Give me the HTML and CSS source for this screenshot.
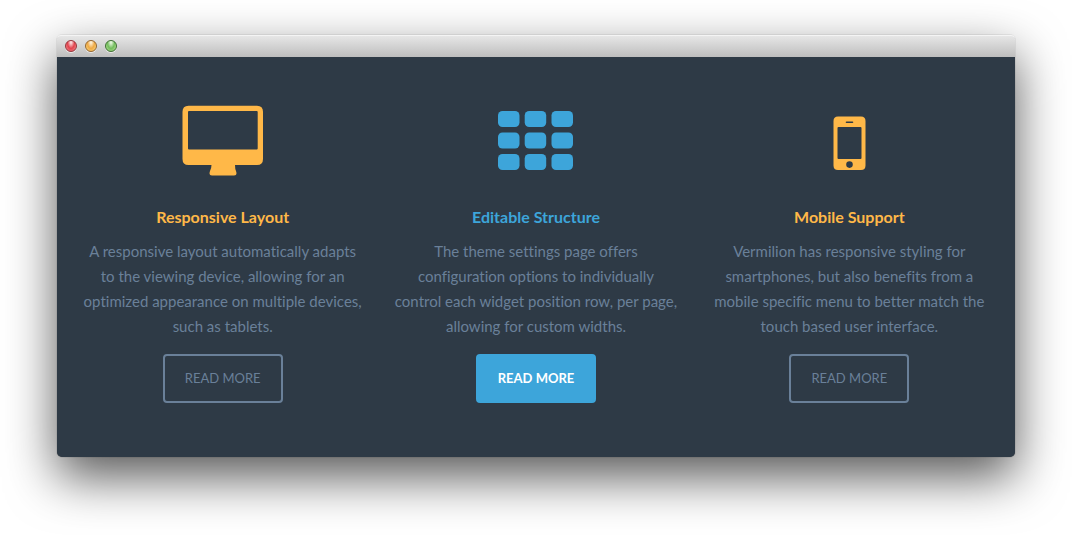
FILE: index.html
```html
<!DOCTYPE html>
<html lang="en">
<head>
<meta charset="utf-8">
<meta name="viewport" content="width=device-width, initial-scale=1">
<title>Vermilion</title>
<link rel="stylesheet" href="styles.css">
</head>
<body>
<main class="window">
  <header class="titlebar">
    <button class="light light-close" type="button" aria-label="Close"></button>
    <button class="light light-minimize" type="button" aria-label="Minimize"></button>
    <button class="light light-zoom" type="button" aria-label="Zoom"></button>
  </header>
  <div class="features">
    <section class="feature">
      <div class="icon">
        <svg width="82" height="80" viewBox="0 0 82 80" aria-hidden="true">
          <path fill="currentColor" fill-rule="evenodd" d="M7 4.700H75Q81 4.700 81 10.700V58Q81 64 75 64H53Q53 68 54 70L54.500 72Q54.500 74.500 52 74.500H30Q27.500 74.500 27.500 72L28 70Q29.500 67 29.500 64H6.500Q0.500 64 0.500 58V10.700Q0.500 4.700 6.500 4.700ZM7 10Q6 10 6 11V47.500Q6 48.500 7 48.500H74.700Q75.700 48.500 75.700 47.500V11Q75.700 10 74.700 10Z"/>
        </svg>
      </div>
      <h2 class="title">Responsive Layout</h2>
      <p class="text">A responsive layout automatically adapts to the viewing device, allowing for an optimized appearance on multiple devices, such as tablets.</p>
      <a class="button" href="#">READ MORE</a>
    </section>
    <section class="feature feature-active">
      <div class="icon">
        <svg width="76" height="80" viewBox="0 0 76 80" fill="currentColor" aria-hidden="true">
          <rect x="0" y="10" width="21.500" height="16" rx="4.500"/>
          <rect x="26.700" y="10" width="21.500" height="16" rx="4.500"/>
          <rect x="53.500" y="10" width="21.500" height="16" rx="4.500"/>
          <rect x="0" y="31.500" width="21.500" height="16" rx="4.500"/>
          <rect x="26.700" y="31.500" width="21.500" height="16" rx="4.500"/>
          <rect x="53.500" y="31.500" width="21.500" height="16" rx="4.500"/>
          <rect x="0" y="53" width="21.500" height="16" rx="4.500"/>
          <rect x="26.700" y="53" width="21.500" height="16" rx="4.500"/>
          <rect x="53.500" y="53" width="21.500" height="16" rx="4.500"/>
        </svg>
      </div>
      <h2 class="title">Editable Structure</h2>
      <p class="text">The theme settings page offers configuration options to individually control each widget position row, per page, allowing for custom widths.</p>
      <a class="button" href="#">READ MORE</a>
    </section>
    <section class="feature">
      <div class="icon">
        <svg width="34" height="80" viewBox="0 0 34 80" aria-hidden="true">
          <path fill="currentColor" fill-rule="evenodd" d="M6 15.500H29Q33.500 15.500 33.500 20V64.500Q33.500 69 29 69H6Q1.500 69 1.500 64.500V20Q1.500 15.500 6 15.500ZM6.500 26Q5.500 26 5.500 27V57Q5.500 58 6.500 58H28.500Q29.500 58 29.500 57V27Q29.500 26 28.500 26ZM14.500 20.500Q13.700 20.500 13.700 21.200Q13.700 22 14.500 22H20.500Q21.300 22 21.300 21.200Q21.300 20.500 20.500 20.500ZM17.500 60.300A3.300 3.300 0 1 0 17.500 66.900A3.300 3.300 0 1 0 17.500 60.300Z"/>
        </svg>
      </div>
      <h2 class="title">Mobile Support</h2>
      <p class="text">Vermilion has responsive styling for smartphones, but also benefits from a mobile specific menu to better match the touch based user interface.</p>
      <a class="button" href="#">READ MORE</a>
    </section>
  </div>
</main>
</body>
</html>
```
FILE: styles.css
```css
* {
  box-sizing: border-box;
}

body {
  margin: 0;
  padding: 35px 57px 78px;
  background: #fff;
  font-family: Lato, "Liberation Sans", sans-serif;
  font-variant-ligatures: no-common-ligatures;
}

.window {
  border-radius: 5px;
  background: #2e3a46;
  box-shadow: 0 0 1px rgba(0, 0, 0, 0.6), 0 20px 50px rgba(0, 0, 0, 0.66);
}

.titlebar {
  display: flex;
  align-items: center;
  gap: 8px;
  height: 22px;
  padding: 0 8px;
  border-radius: 4px 4px 0 0;
  background: linear-gradient(#e8e8e8, #bebebe);
  box-shadow: inset 0 1px 0 #f4f4f4;
}

.light {
  width: 12px;
  height: 12px;
  padding: 0;
  border: 1px solid;
  border-radius: 50%;
  box-shadow: 0 1px 0 rgba(255, 255, 255, 0.6);
}

.light-close {
  border-color: #97363c;
  background: radial-gradient(ellipse at 50% 10%, #fbd5d7 10%, #e2434d 50%, #f9979b 100%);
}

.light-minimize {
  border-color: #96662f;
  background: radial-gradient(ellipse at 50% 10%, #fdeccd 10%, #efa944 50%, #fde38c 100%);
}

.light-zoom {
  border-color: #3f7033;
  background: radial-gradient(ellipse at 50% 10%, #dff3d6 10%, #72bd5c 50%, #c0ec9e 100%);
}

.features {
  display: grid;
  grid-template-columns: repeat(auto-fit, minmax(240px, 1fr));
  gap: 30px;
  padding: 44px 24px 54px;
}

.feature {
  color: #ffb848;
  text-align: center;
}

.feature-active {
  color: #3da5da;
}

.icon {
  display: flex;
  justify-content: center;
  height: 80px;
}

.title {
  margin: 24px 0 10px;
  font-size: 16px;
  font-weight: 700;
  line-height: 24px;
}

.text {
  margin: 0 0 15px;
  color: #6a8099;
  font-size: 15px;
  line-height: 25px;
}

.button {
  display: inline-block;
  padding: 0 20px;
  border: 2px solid #6a8099;
  border-radius: 4px;
  color: #6a8099;
  font-size: 13px;
  line-height: 45px;
  text-decoration: none;
  vertical-align: top;
}

.feature-active .button {
  border-color: #3da5da;
  background: #3da5da;
  color: #fff;
  font-weight: 700;
}
```
